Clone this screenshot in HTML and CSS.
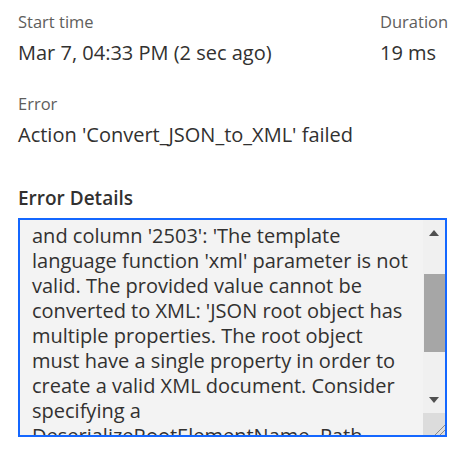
FILE: index.html
```html
<!DOCTYPE html>
<html lang="en">
<head>
  <meta charset="UTF-8" />
  <meta name="viewport" content="width=device-width, initial-scale=1.0"/>
  <title>Run details</title>
  <link rel="stylesheet" href="styles.css">
</head>
<body>

  <div class="panel">
    <div class="summary">
      <div class="label">Start time</div>
      <div class="label">Duration</div>
      <div class="value">Mar 7, 04:33 PM (2 sec ago)</div>
      <div class="value">19 ms</div>
    </div>

    <div class="label error-label">Error</div>
    <div class="value action">Action 'Convert_JSON_to_XML' failed</div>

    <h2 class="details-title">Error Details</h2>
    <div class="details-box">
      <div class="details-text">
        and column '2503': 'The template<br>
        language function 'xml' parameter is not<br>
        valid. The provided value cannot be<br>
        converted to XML: 'JSON root object has<br>
        multiple properties. The root object<br>
        must have a single property in order to<br>
        create a valid XML document. Consider<br>
        specifying a<br>
        DeserializeRootElementName. Path
      </div>
      <div class="scrollbar">
        <div class="arrow"><span class="tri up"></span></div>
        <div class="track"><div class="thumb"></div></div>
        <div class="arrow"><span class="tri down"></span></div>
        <div class="resizer">
          <svg width="22" height="22" viewBox="0 0 22 22">
            <line x1="22" y1="12" x2="12" y2="22" stroke="#8a8a8a" stroke-width="1"/>
            <line x1="22" y1="17" x2="17" y2="22" stroke="#8a8a8a" stroke-width="1"/>
          </svg>
        </div>
      </div>
    </div>
  </div>

</body>
</html>
```

FILE: styles.css
```css
body { margin: 0; font-family: "Open Sans", sans-serif; background: #fff; color: #323130; }
.panel { padding: 10px 18px 0 18px; }
.summary { display: grid; grid-template-columns: 1fr 67px; row-gap: 2px; }
.label { font-size: 16.5px; line-height: 24px; color: #605e5c; }
.value { font-size: 20px; line-height: 34px; color: #323130; white-space: nowrap; }
.error-label { margin-top: 22px; }
.action { margin-top: 2px; }
.details-title { margin: 34px 0 8px 0; font-size: 19px; line-height: 24px; font-weight: 600; color: #323130; }
.details-box { display: flex; height: 215px; border: 2px solid #1467ff; background: #f3f3f3; }
.details-text { flex: 1; overflow: hidden; padding: 3px 12px 0 12px; font-size: 20px; line-height: 25px; white-space: nowrap; color: #323130; }
.scrollbar { display: flex; flex-direction: column; width: 22px; background: #f0f0f0; }
.arrow { height: 26px; display: flex; align-items: center; justify-content: center; }
.tri { width: 0; height: 0; border-left: 5.5px solid transparent; border-right: 5.5px solid transparent; }
.tri.up { border-bottom: 6px solid #505050; }
.tri.down { border-top: 6px solid #505050; }
.track { flex: 1; padding-top: 28px; }
.thumb { height: 78px; margin-left: 1px; background: #a6a6a6; }
.resizer { height: 22px; background: #dcdcdc; }
.resizer svg { display: block; }
```
